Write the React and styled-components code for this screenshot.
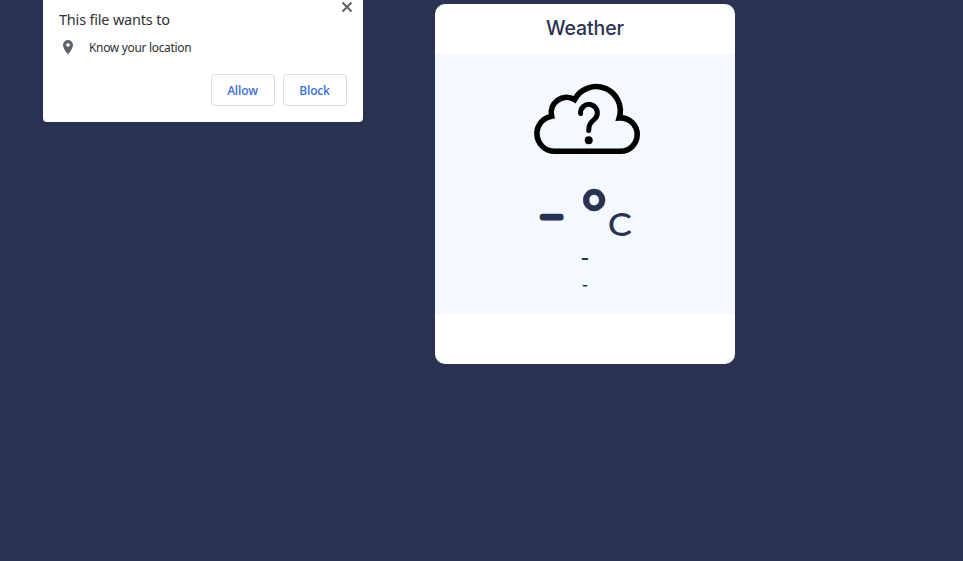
import React from "react";
import styled, { createGlobalStyle } from "styled-components";

const GlobalStyle = createGlobalStyle`
  * { box-sizing: border-box; }
  body { margin: 0; background: #293251; overflow: hidden; }
`;

const Page = styled.main`
  display: flex;
  align-items: flex-start;
  height: 561px;
  padding-left: 43px;
  background: #293251;
`;

const Prompt = styled.section`
  position: relative;
  width: 320px;
  height: 122px;
  padding: 9px 16px 16px;
  background: #fff;
  border-radius: 0 0 4px 4px;
  font-family: "Noto Sans", "Open Sans", sans-serif;
  color: #303134;
`;

const PromptTitle = styled.h2`
  margin: 0;
  font-size: 14.5px;
  font-weight: 400;
  line-height: 20px;
  letter-spacing: -0.2px;
  white-space: nowrap;
`;

const Permission = styled.div`
  display: flex;
  align-items: center;
  gap: 16px;
  height: 20px;
  margin-top: 8px;
  padding-left: 4px;
  font-size: 12px;
  letter-spacing: -0.33px;
  white-space: nowrap;
`;

const Actions = styled.div`
  display: flex;
  justify-content: flex-end;
  gap: 8px;
  margin-top: 17px;
`;

const ActionButton = styled.button`
  width: 64px;
  height: 32px;
  padding: 0 1px 0 0;
  border: 1px solid #dadce0;
  border-radius: 4px;
  background: #fff;
  color: #3f6fd8;
  font: 600 12px "Open Sans", "Noto Sans", sans-serif;
  letter-spacing: -0.2px;
`;

const CloseButton = styled.button`
  position: absolute;
  top: 1px;
  right: 10px;
  display: flex;
  padding: 0;
  border: 0;
  background: none;
`;

const Card = styled.article`
  display: flex;
  flex-direction: column;
  width: 300px;
  height: 360px;
  margin: 4px 0 0 72px;
  border-radius: 10px;
  overflow: hidden;
  background: #fff;
  color: #293251;
  font-family: Lato, sans-serif;
`;

const CardHeader = styled.header`
  height: 50px;
  padding-top: 12px;
  text-align: center;
`;

const CardTitle = styled.h1`
  margin: 0;
  font: 500 19.5px/24px Inter, sans-serif;
  letter-spacing: -0.1px;
`;

const CardBody = styled.div`
  display: flex;
  flex-direction: column;
  align-items: center;
  height: 260px;
  padding-top: 26px;
  background: #f4f9ff;
`;

const CloudIcon = styled.svg`
  flex: none;
  margin-left: 4px;
`;

const Temperature = styled.div`
  display: flex;
  justify-content: center;
  width: 100px;
  height: 66px;
  margin-top: 20px;
`;

const Reading = styled.svg`
  display: block;
  flex: none;
  overflow: visible;
  fill: currentColor;
  stroke: currentColor;
  stroke-linejoin: round;
`;

const Value = styled.text`
  font: 300 47px Lato, sans-serif;
  stroke-width: 5.2px;
`;

const Degree = styled.text`
  font: 900 62px Lato, sans-serif;
  stroke-width: 0.3px;
`;

const Unit = styled.text`
  font: 300 30px Lato, sans-serif;
  stroke-width: 1.8px;
`;

const Detail = styled.div`
  height: 26px;
  font: 600 ${(p) => p.$size}px/26px Inter, sans-serif;
`;

export default function App() {
  return (
    <>
      <GlobalStyle />
      <Page>
        <Prompt>
          <CloseButton aria-label="Close">
            <svg width="12" height="12" viewBox="0 0 12 12" stroke="#5f6368" strokeWidth="2">
              <path d="M1.5 1.5 10.5 10.5M10.5 1.5 1.5 10.5" />
            </svg>
          </CloseButton>
          <PromptTitle>This file wants to</PromptTitle>
          <Permission>
            <svg width="10" height="15" viewBox="0 0 10 15" fill="#5f6368">
              <path fillRule="evenodd" d="M5 0a5 5 0 0 0-5 5c0 3.7 5 9.6 5 9.6s5-5.9 5-9.6a5 5 0 0 0-5-5Zm0 3.2a1.8 1.8 0 1 1 0 3.6 1.8 1.8 0 0 1 0-3.6Z" />
            </svg>
            <span>Know your location</span>
          </Permission>
          <Actions>
            <ActionButton>Allow</ActionButton>
            <ActionButton>Block</ActionButton>
          </Actions>
        </Prompt>
        <Card>
          <CardHeader>
            <CardTitle>Weather</CardTitle>
          </CardHeader>
          <CardBody>
            <CloudIcon width="114" height="80" viewBox="0 0 114 80" fill="none" stroke="#000" strokeWidth="5.6">
              <path d="M24.6 71.3A17.7 17.7 0 0 1 6.9 53.6A17.7 17.7 0 0 1 21.6 36.2A15.4 15.4 0 0 1 44.6 19.6A24.2 24.2 0 0 1 89.2 37.9A16.7 16.7 0 0 1 107.2 54.6A16.7 16.7 0 0 1 90.5 71.3Z" />
              <path d="M50.6 33.6A8.4 8.4 0 1 1 65.4 38.2C62 41.6 58.7 43.3 58.7 50.4" strokeWidth="5" strokeLinecap="round" />
              <circle cx="58.7" cy="60.3" r="4" fill="#000" stroke="none" />
            </CloudIcon>
            <Temperature>
              <Reading width="100" height="60" viewBox="0 0 100 60">
                <Value x="3" y="51">–</Value>
                <Degree x="46.3" y="55.3">°</Degree>
                <Unit transform="translate(73.4 54.8) scale(1.11 1)">C</Unit>
              </Reading>
            </Temperature>
            <Detail $size={19}>-</Detail>
            <Detail $size={14}>-</Detail>
          </CardBody>
        </Card>
      </Page>
    </>
  );
}
